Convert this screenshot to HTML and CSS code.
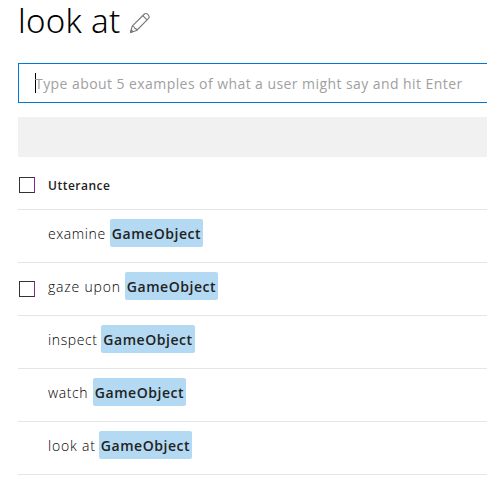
FILE: index.html
```
<!DOCTYPE html>
<html lang="en">
<head>
<meta charset="utf-8">
<title>look at</title>
<link rel="stylesheet" href="styles.css">
</head>
<body>
<main class="intent">
  <header class="intent-header">
    <h1 class="intent-name">look at</h1>
    <svg class="edit-icon" width="22" height="22" viewBox="0 0 22 22" fill="none" stroke="#777" stroke-width="1.1" stroke-linejoin="round">
      <path d="M1.5 20.5L3.2 14.2L15.4 2Q16.9 .8 18.5 2.2L19.4 3.1Q20.9 4.8 19.6 6.3L7.6 18.5Z"/>
      <path d="M3.2 14.2Q5.4 14 5.6 16.2Q7.7 16.4 7.6 18.5M13.8 3.6L18 7.8M1.5 20.5L2.3 17.9L4 19.6Z"/>
    </svg>
  </header>
  <div class="utterance-input"><span class="caret"></span><span class="placeholder">Type about 5 examples of what a user might say and hit Enter</span></div>
  <div class="toolbar"></div>
  <section class="utterances">
    <div class="row row-head"><span class="checkbox"></span><span class="heading">Utterance</span></div>
    <div class="row"><span class="text examine">examine</span><span class="entity">GameObject</span></div>
    <div class="row"><span class="checkbox"></span><span class="text gaze">gaze upon</span><span class="entity">GameObject</span></div>
    <div class="row"><span class="text inspect">inspect</span><span class="entity entity-wide">GameObject</span></div>
    <div class="row"><span class="text watch">watch</span><span class="entity">GameObject</span></div>
    <div class="row"><span class="text look">look at</span><span class="entity">GameObject</span></div>
  </section>
</main>
</body>
</html>
```
FILE: styles.css
```
* { box-sizing: border-box; }
body {
  margin: 0;
  background: #fff;
  color: #222;
  font-family: "Open Sans", "Noto Sans", sans-serif;
}
.intent { padding-left: 18px; }
.intent-header { display: flex; height: 63px; }
.intent-name {
  margin: 0;
  width: 111px;
  color: #000;
  font-family: "Noto Sans", "Open Sans", sans-serif;
  font-size: 33px;
  font-weight: 300;
  letter-spacing: 0.3px;
  line-height: 42px;
  white-space: nowrap;
}
.edit-icon { margin-top: 12px; }
.utterance-input {
  display: flex;
  align-items: center;
  height: 40px;
  padding-left: 16px;
  border: 1px solid #0078d7;
  border-right: 0;
}
.caret { width: 1px; height: 20px; margin-right: -1px; background: #000; }
.placeholder {
  color: #a0a0a0;
  font-size: 14px;
  letter-spacing: 0.43px;
  white-space: nowrap;
}
.toolbar { height: 40px; margin-top: 14px; background: #f1f1f1; }
.row {
  display: grid;
  grid-template-columns: 30px max-content max-content;
  align-items: center;
  height: 53px;
  border-bottom: 1px solid #e5e5e5;
}
.row-head { padding-top: 4px; }
.checkbox {
  grid-column: 1;
  width: 16px;
  height: 16px;
  margin-left: 1px;
  border: 1px solid #333;
  border-right-color: #80288c;
}
.heading { font-size: 12px; font-weight: 600; letter-spacing: 0.5px; }
.text {
  grid-column: 2;
  height: 28px;
  margin-top: -6px;
  color: #000;
  font-size: 14px;
  font-weight: 300;
  letter-spacing: 0.6px;
  line-height: 30px;
  white-space: nowrap;
}
.examine { width: 62px; }
.gaze { width: 77px; letter-spacing: 0.8px; }
.inspect { width: 53px; }
.watch { width: 45px; }
.look { width: 51px; letter-spacing: 0.8px; }
.entity {
  width: 93px;
  height: 28px;
  margin-top: -6px;
  border-radius: 2px;
  background: #b3daf2;
  font-size: 14px;
  font-weight: 600;
  letter-spacing: 0.55px;
  line-height: 30px;
  text-align: center;
}
.entity-wide { width: 94px; }
```
